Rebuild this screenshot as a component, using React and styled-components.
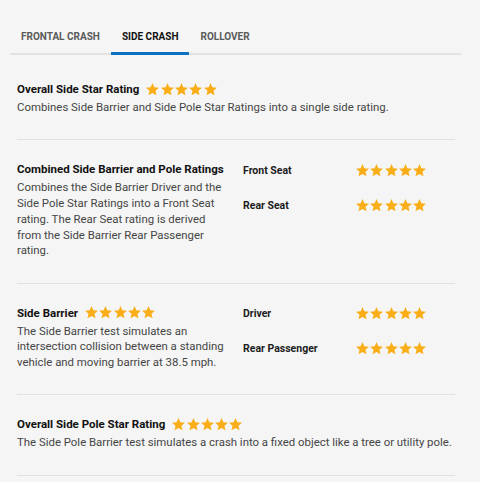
import React from 'react';
import styled, { createGlobalStyle } from 'styled-components';

const GlobalStyle = createGlobalStyle`
    html, body {
        margin: 0;
        padding: 0;
        background: #f5f5f5;
        font-family: Roboto, "Liberation Sans", Arial, sans-serif;
    }
`

const Page = styled.div`
    padding: 20px 19px 0 10px;
`

const TabBar = styled.div`
    display: flex;
    border-bottom: 2px solid #e2e2e2;
`

const Tab = styled.div`
    height: 35px;
    line-height: 34px;
    padding: 0 11px;
    margin-bottom: -2px;
    box-sizing: border-box;
    font-size: 10px;
    font-weight: 700;
    text-transform: uppercase;
    color: ${p => p.$active ? '#111' : '#5a5a5a'};
    border-bottom: 3px solid ${p => p.$active ? '#0b72c2' : 'transparent'};
`

const Content = styled.div`
    padding: 0 6px 0 7px;
`

const Section = styled.div`
    display: flex;
    padding: ${p => p.$first ? '25px' : '20px'} 0 23.5px;
    border-bottom: 1px solid #e2e2e2;
`

const Left = styled.div`
    width: ${p => p.$wide ? 'auto' : '212px'};
    flex: ${p => p.$wide ? '1' : 'none'};
    margin-right: ${p => p.$wide ? '0' : '14px'};
`

const Title = styled.div`
    display: flex;
    align-items: center;
    gap: 7px;
    font-size: 11.5px;
    line-height: 18px;
    font-weight: 700;
    color: #111;
    margin-bottom: 2px;
    white-space: nowrap;
`

const Desc = styled.div`
    font-size: 11.4px;
    line-height: 15.75px;
    color: #454545;
`

const Right = styled.div`
    display: flex;
    flex-direction: column;
    gap: 17px;
    padding-top: 1px;
`

const RatingRow = styled.div`
    display: flex;
    align-items: center;
    height: 18px;
`

const Label = styled.span`
    width: 113px;
    font-size: 10.5px;
    font-weight: 700;
    color: #1c1c1c;
`

const StarRow = styled.span`
    display: inline-flex;
    gap: 1.3px;
`

const Star = () => (
    <svg width="13" height="12.6" viewBox="2 2 20 19.4">
        <path fill="#f9ad17" d="M12 17.27L18.18 21l-1.64-7.03L22 9.24l-7.19-.61L12 2 9.19 8.63 2 9.24l5.46 4.73L5.82 21z"/>
    </svg>
)

const Stars = () => (
    <StarRow>
        {[0, 1, 2, 3, 4].map(i => <Star key={i}/>)}
    </StarRow>
)

const tabs = ['Frontal Crash', 'Side Crash', 'Rollover'];

const App = () => {
    return (
        <Page>
            <GlobalStyle/>
            <TabBar>
                {tabs.map(t => <Tab key={t} $active={t === 'Side Crash'}>{t}</Tab>)}
            </TabBar>
            <Content>
                <Section $first>
                    <Left $wide>
                        <Title>Overall Side Star Rating <Stars/></Title>
                        <Desc>Combines Side Barrier and Side Pole Star Ratings into a single side rating.</Desc>
                    </Left>
                </Section>
                <Section>
                    <Left>
                        <Title>Combined Side Barrier and Pole Ratings</Title>
                        <Desc>Combines the Side Barrier Driver and the Side Pole Star Ratings into a Front Seat rating. The Rear Seat rating is derived from the Side Barrier Rear Passenger rating.</Desc>
                    </Left>
                    <Right>
                        <RatingRow><Label>Front Seat</Label><Stars/></RatingRow>
                        <RatingRow><Label>Rear Seat</Label><Stars/></RatingRow>
                    </Right>
                </Section>
                <Section>
                    <Left>
                        <Title>Side Barrier <Stars/></Title>
                        <Desc>The Side Barrier test simulates an intersection collision between a standing vehicle and moving barrier at 38.5 mph.</Desc>
                    </Left>
                    <Right>
                        <RatingRow><Label>Driver</Label><Stars/></RatingRow>
                        <RatingRow><Label>Rear Passenger</Label><Stars/></RatingRow>
                    </Right>
                </Section>
                <Section>
                    <Left $wide>
                        <Title>Overall Side Pole Star Rating <Stars/></Title>
                        <Desc>The Side Pole Barrier test simulates a crash into a fixed object like a tree or utility pole.</Desc>
                    </Left>
                </Section>
            </Content>
        </Page>
    )
}

export default App
